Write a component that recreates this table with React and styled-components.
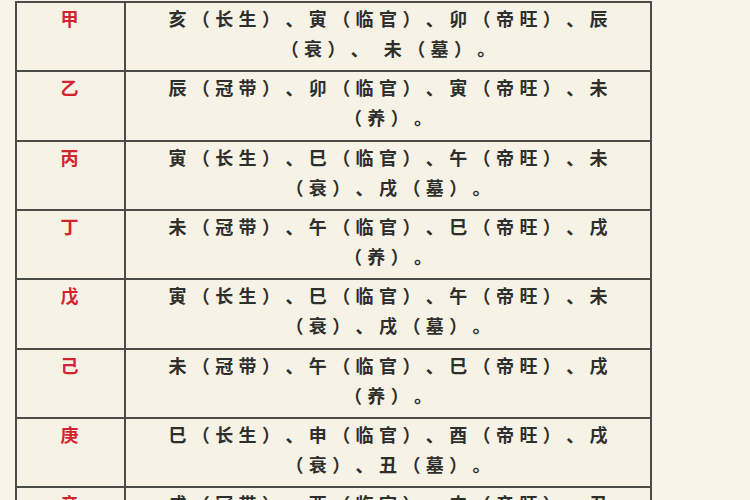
import React from "react";
import styled, { createGlobalStyle } from "styled-components";

const Global = createGlobalStyle`
  html, body { margin: 0; padding: 0; background: #f8f4e9; }
  body { width: 750px; height: 500px; overflow: hidden; }
`;

const Page = styled.div`
  padding: 1px 0 0 15px;
  font-family: "Noto Sans CJK SC", "Noto Sans CJK TC", sans-serif;
`;

const Table = styled.div`
  width: 637px;
  box-sizing: border-box;
  border: 2px solid #4b4b47;
  border-bottom: none;
  background: #f6f2e6;
`;

const Row = styled.div`
  display: grid;
  grid-template-columns: 109px 1fr;
  height: 69.33px;
  box-sizing: border-box;
  border-bottom: 2px solid #4b4b47;
`;

const Stem = styled.div`
  box-sizing: border-box;
  border-right: 2px solid #4b4b47;
  color: #d3232f;
  font-size: 18px;
  font-weight: 700;
  line-height: 30px;
  text-align: center;
  padding-right: 2px;
`;

const Content = styled.div`
  color: #2e2e2b;
  font-size: 18px;
  font-weight: 700;
  line-height: 30px;
  letter-spacing: 5.4px;
  text-indent: 5.4px;
  text-align: center;
  white-space: pre;
  text-spacing-trim: space-all;
  font-feature-settings: "halt" 0, "chws" 0;
`;

const Line = styled.div``;

const rows = [
  ["甲", "亥（长生）、寅（临官）、卯（帝旺）、辰", "（衰）、 未（墓）。"],
  ["乙", "辰（冠带）、卯（临官）、寅（帝旺）、未", "（养）。"],
  ["丙", "寅（长生）、巳（临官）、午（帝旺）、未", "（衰）、戌（墓）。"],
  ["丁", "未（冠带）、午（临官）、巳（帝旺）、戌", "（养）。"],
  ["戊", "寅（长生）、巳（临官）、午（帝旺）、未", "（衰）、戌（墓）。"],
  ["己", "未（冠带）、午（临官）、巳（帝旺）、戌", "（养）。"],
  ["庚", "巳（长生）、申（临官）、酉（帝旺）、戌", "（衰）、丑（墓）。"],
  ["辛", "戌（冠带）、酉（临官）、申（帝旺）、丑", "（衰）、辰（墓）。"],
];

export default function App() {
  return (
    <>
      <Global />
      <Page>
        <Table>
          {rows.map(([s, a, b]) => (
            <Row key={s}>
              <Stem>{s}</Stem>
              <Content>
                <Line>{a}</Line>
                <Line>{b}</Line>
              </Content>
            </Row>
          ))}
        </Table>
      </Page>
    </>
  );
}
